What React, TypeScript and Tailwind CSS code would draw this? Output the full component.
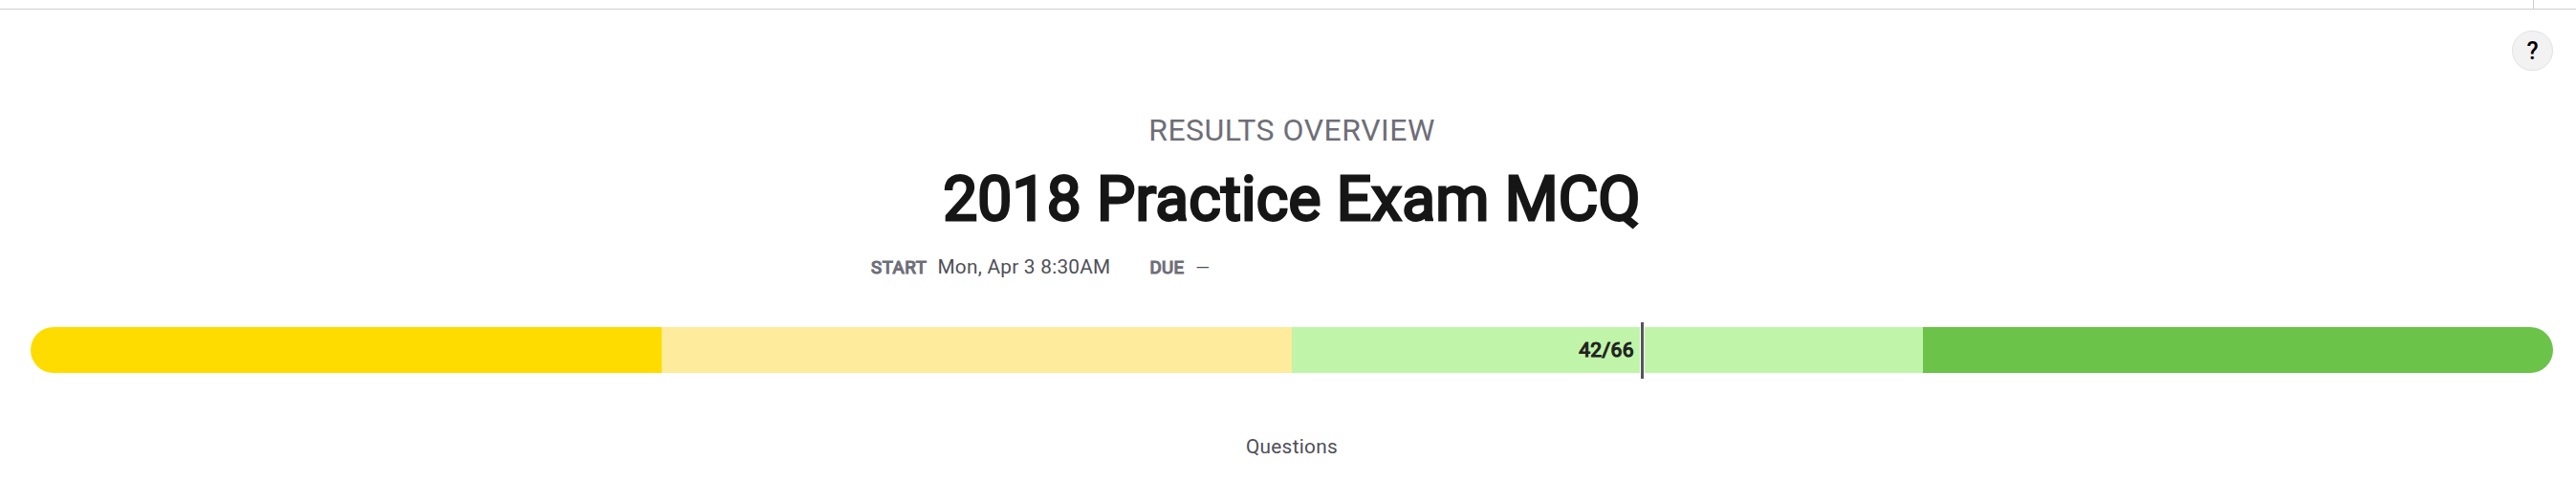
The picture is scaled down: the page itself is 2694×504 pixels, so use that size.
export default function App() {
  return (
    <main className="flex h-[504px] w-full flex-col overflow-hidden bg-white font-['Roboto',sans-serif] text-[#4f4f58]">
      <header className="flex h-[10px] shrink-0 justify-end border-b border-[#cfcfcf]">
        <div className="w-[45px] border-l border-[#cfcfcf]" />
      </header>
      <div className="flex h-[110px] shrink-0 justify-end pt-[22px] pr-[24px]">
        <button className="flex h-[42px] w-[43px] items-center justify-center rounded-full border border-[#e3e3e3] bg-[#f2f2f2] pt-[2px] text-[25px] font-medium text-black">?</button>
      </div>
      <div className="flex shrink-0 flex-col items-center pl-[8px]">
        <p className="text-[32px] leading-[32px] tracking-[0.5px] text-[#6e6e78]">RESULTS OVERVIEW</p>
        <h1 className="mt-[21px] text-[64px] leading-[72px] font-normal tracking-[0.2px] text-[#161616] [-webkit-text-stroke:2.8px_#161616]">2018 Practice Exam MCQ</h1>
      </div>
      <div className="mt-[11px] ml-[911px] flex h-[48px] shrink-0 items-center gap-[41px] text-[20.8px] tracking-[0.25px]">
        <p className="flex items-baseline gap-[11px]">
          <span className="text-[18.7px] tracking-[0.55px] text-[#6e6e78] [-webkit-text-stroke:1.2px_#6e6e78]">START</span>
          <span>Mon, Apr 3 8:30AM</span>
        </p>
        <p className="flex items-baseline gap-[12px]">
          <span className="text-[18.7px] text-[#6e6e78] [-webkit-text-stroke:1.2px_#6e6e78]">DUE</span>
          <span className="text-[19px]">—</span>
        </p>
      </div>
      <div className="relative mt-[38px] mr-[24px] ml-[32px] h-[48px] shrink-0">
        <div className="grid h-full grid-cols-4 overflow-hidden rounded-full">
          <div className="bg-[#ffdc00]" />
          <div className="bg-[#ffeb9c]" />
          <div className="bg-[#c0f5a9]" />
          <div className="bg-[#6cc34a]" />
        </div>
        <span className="absolute top-0 right-[961px] text-[21px] leading-[48px] tracking-[0.4px] text-[#222] [-webkit-text-stroke:1.2px_#222]">42/66</span>
        <div className="absolute -top-[5px] left-[1683px] h-[59px] w-[5px] border-x border-white bg-[#55555d]" />
      </div>
      <p className="mt-[62px] pl-[8px] text-center text-[20.8px] leading-[30px] tracking-[0.3px]">Questions</p>
    </main>
  );
}
